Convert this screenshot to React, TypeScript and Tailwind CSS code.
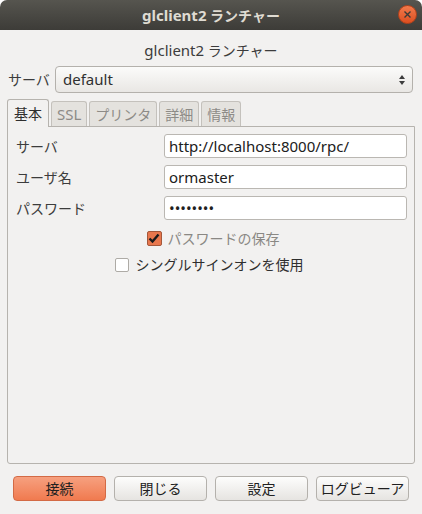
const font = "font-['Noto_Sans','Noto_Sans_CJK_JP',sans-serif]";

const tabs = ['基本', 'SSL', 'プリンタ', '詳細', '情報'];

const fields = [
  { label: 'サーバ', value: 'http://localhost:8000/rpc/' },
  { label: 'ユーザ名', value: 'ormaster' },
  { label: 'パスワード', value: '••••••••' },
];

const buttons = ['閉じる', '設定', 'ログビューア'];

const CloseButton = () => (
  <div className="flex h-[19px] w-[19px] items-center justify-center rounded-full border border-[#b8421a] bg-gradient-to-b from-[#f27a4b] to-[#dc4e1f]">
    <svg width="9" height="9" viewBox="0 0 9 9">
      <path d="M1.5 1.5 L7.5 7.5 M7.5 1.5 L1.5 7.5" stroke="#3c3b37" strokeWidth="1.4" />
    </svg>
  </div>
);

const App = () => {
  return (
    <div className={`flex h-[514px] w-[422px] flex-col bg-white text-[14px] text-[#3c3c3c] ${font}`}>
      {/* title bar */}
      <div className="relative flex h-[30px] items-center justify-center rounded-t-[7px] bg-gradient-to-b from-[#56554f] to-[#3d3c38]">
        <span className="text-[14px] font-bold text-[#dfdbd2]">
          <span className="text-[15px]">glclient2</span> ランチャー
        </span>
        <div className="absolute right-[5px] top-[5px]">
          <CloseButton />
        </div>
      </div>

      <div className="flex flex-1 flex-col bg-[#f2f1f0] px-[7px]">
        <div className="mt-[10px] flex h-[20px] items-center justify-center">
          <span className="text-[15px]">glclient2</span>&nbsp;ランチャー
        </div>

        {/* server selector */}
        <div className="mt-[6px] flex items-center">
          <span className="w-[48px] pl-[1px]">サーバ</span>
          <div className="mr-[2px] flex h-[27px] flex-1 items-center justify-between rounded-[4px] border border-[#b4b1ac] bg-gradient-to-b from-[#fbfbfa] to-[#e9e7e4] pl-[7px] pr-[6px]">
            <span className="text-[15px] text-[#303030]">default</span>
            <svg width="8" height="14" viewBox="0 0 8 14">
              <path d="M4 2 L7 6 L1 6 Z M4 12 L7 8 L1 8 Z" fill="#3c3c3c" />
            </svg>
          </div>
        </div>

        {/* tabs */}
        <div className="mt-[6px] flex h-[27px] items-end gap-[2px]">
          {tabs.map((t, i) =>
            i === 0 ? (
              <div
                key={t}
                className="relative z-10 -mb-px flex h-[28px] w-[42px] items-center justify-center rounded-t-[3px] border border-b-0 border-[#b6b3ae] bg-[#f2f1f0] text-[#2e2e2e]"
              >
                {t}
              </div>
            ) : (
              <div
                key={t}
                className="flex h-[25px] items-center justify-center rounded-t-[3px] border border-b-0 border-[#c4c1bc] bg-[#e4e2de] px-[5px] text-[#8d8b87]"
              >
                {t === 'SSL' ? <span className="text-[15px]">{t}</span> : t}
              </div>
            )
          )}
        </div>

        {/* panel */}
        <div className="flex h-[338px] flex-col rounded-b-[3px] border border-[#b6b3ae] bg-[#f2f1f0] px-[7px] pt-[7px]">
          <div className="flex flex-col gap-[7px]">
            {fields.map((f) => (
              <div key={f.label} className="flex items-center">
                <span className="flex-1 pl-[1px]">{f.label}</span>
                <div className="flex h-[24px] w-[243px] items-center rounded-[3px] border border-[#bab7b2] bg-white px-[4px] text-[15px] text-[#202020]">
                  {f.value}
                </div>
              </div>
            ))}
          </div>

          <div className="mt-[8px] flex items-center justify-center pl-[4px]">
            <div className="flex h-[15px] w-[15px] items-center justify-center rounded-[2px] border border-[#a4573a] bg-[#e8774d]">
              <svg width="12" height="11" viewBox="0 0 12 11">
                <path d="M1.5 5.5 L4.5 8.5 L10.5 1.5" stroke="#1a1a1a" strokeWidth="2.4" fill="none" />
              </svg>
            </div>
            <span className="ml-[6px] text-[#8a8884]">パスワードの保存</span>
          </div>

          <div className="mt-[5px] flex items-center justify-center pr-[4px]">
            <div className="h-[14px] w-[14px] rounded-[2px] border border-[#aeaba6] bg-white" />
            <span className="ml-[7px] text-[#2e2e2e]">シングルサインオンを使用</span>
          </div>
        </div>

        {/* buttons */}
        <div className="mt-[12px] flex gap-[8px] px-[6px]">
          <div className="flex h-[25px] w-[93px] items-center justify-center rounded-[4px] border border-[#d36a45] bg-gradient-to-b from-[#f6a07f] to-[#f07a4f] text-[#202020]">
            接続
          </div>
          {buttons.map((b) => (
            <div
              key={b}
              className="flex h-[25px] w-[93px] items-center justify-center rounded-[4px] border border-[#b4b1ac] bg-gradient-to-b from-[#fdfdfc] to-[#e6e4e1] text-[#202020]"
            >
              {b}
            </div>
          ))}
        </div>
      </div>
    </div>
  );
};

export default App;
